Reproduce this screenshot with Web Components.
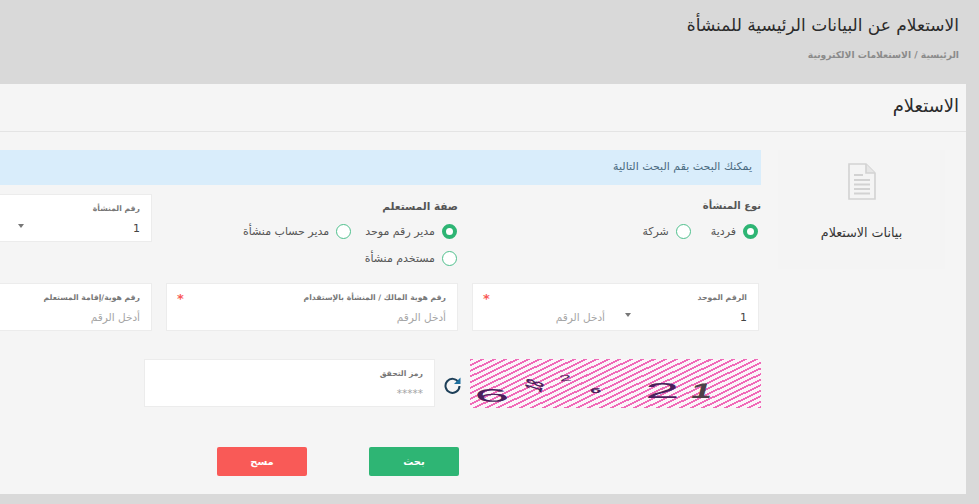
<!DOCTYPE html>
<html lang="ar" dir="rtl">
<head>
<meta charset="utf-8">
<title>الاستعلام</title>
<style>
  html, body { margin: 0; padding: 0; height: 504px; overflow: hidden; background: #d9d9d9; }
  body { font-family: "DejaVu Sans", sans-serif; color: #333; }
</style>
</head>
<body>
<x-page-head title-text="الاستعلام عن البيانات الرئيسية للمنشأة" crumbs="الرئيسية / الاستعلامات الالكترونية"></x-page-head>
<x-panel heading="الاستعلام">
  <x-side-card slot="side" label="بيانات الاستعلام"></x-side-card>
  <x-alert>يمكنك البحث بقم البحث التالية</x-alert>
  <x-row class="types">
    <x-radio-group heading="نوع المنشأة" class="first">
      <x-radio checked>فردية</x-radio>
      <x-radio>شركة</x-radio>
    </x-radio-group>
    <x-radio-group heading="صفة المستعلم">
      <x-radio checked>مدير رقم موحد</x-radio>
      <x-radio>مدير حساب منشأة</x-radio>
      <x-radio>مستخدم منشأة</x-radio>
    </x-radio-group>
    <x-field label="رقم المنشأة" value="1" select></x-field>
  </x-row>
  <x-row class="ids">
    <x-field label="الرقم الموحد" value="1" select placeholder="أدخل الرقم" required></x-field>
    <x-field label="رقم هوية المالك / المنشأة بالإستقدام" placeholder="أدخل الرقم" required></x-field>
    <x-field label="رقم هوية/إقامة المستعلم" placeholder="أدخل الرقم"></x-field>
  </x-row>
  <x-row class="verify">
    <x-captcha></x-captcha>
    <x-field label="رمز التحقق" placeholder="*****"></x-field>
  </x-row>
  <x-actions>
    <x-btn color="#2eb574">بحث</x-btn>
    <x-btn color="#f95a57">مسح</x-btn>
  </x-actions>
</x-panel>

<script>
/* global HTMLElement customElements */

class XPageHead extends HTMLElement {
  connectedCallback() {
    const shadowRoot = this.attachShadow({ mode: 'open' });
    shadowRoot.innerHTML = `
      <style>
        :host { display: block; height: 84px; padding: 0 20px 0 0; box-sizing: border-box; }
        h1 { margin: 0; padding-top: 13px; font-size: 17px; line-height: 24px; font-weight: 400; color: #2b2b2b; }
        div { margin-top: 8px; font-size: 9.2px; line-height: 20px; font-weight: 700; color: #8b8b8b; }
      </style>
      <h1>${this.getAttribute('title-text')}</h1>
      <div>${this.getAttribute('crumbs')}</div>
    `;
  }
}
customElements.define('x-page-head', XPageHead);

class XPanel extends HTMLElement {
  connectedCallback() {
    const shadowRoot = this.attachShadow({ mode: 'open' });
    shadowRoot.innerHTML = `
      <style>
        :host { display: block; width: 966px; height: 410px; margin-right: 13px; background: #f5f5f5; overflow: hidden; }
        header { height: 48px; box-sizing: border-box; border-bottom: 1px solid #e4e4e4; padding-right: 7px;
          font-size: 18px; line-height: 43px; color: #2b2b2b; }
        .body { display: flex; align-items: flex-start; padding-top: 18px; }
        .side { flex: none; width: 205px; padding-right: 21px; box-sizing: border-box; }
        .main { flex: none; width: 761px; }
      </style>
      <header>${this.getAttribute('heading')}</header>
      <div class="body">
        <div class="side"><slot name="side"></slot></div>
        <div class="main"><slot></slot></div>
      </div>
    `;
  }
}
customElements.define('x-panel', XPanel);

class XSideCard extends HTMLElement {
  connectedCallback() {
    const shadowRoot = this.attachShadow({ mode: 'open' });
    shadowRoot.innerHTML = `
      <style>
        :host { display: flex; flex-direction: column; align-items: center; width: 167px; height: 106px; padding-top: 13px;
          background: #f4f4f4; }
        svg { display: block; }
        span { margin-top: 25px; font-size: 12.7px; line-height: 16px; color: #333; }
      </style>
      <svg width="28" height="37" viewBox="0 0 28 37" fill="none" stroke="#d2d2d2" stroke-width="1.6">
        <path d="M1 1H18L27 10V36H1Z"/>
        <path d="M18 1V10H27" fill="#e6e6e6"/>
        <path d="M6 12H15M6 17H22M6 21.500H22M6 26H22M6 30.500H22" stroke-width="1.800"/>
      </svg>
      <span>${this.getAttribute('label')}</span>
    `;
  }
}
customElements.define('x-side-card', XSideCard);

class XAlert extends HTMLElement {
  constructor() {
    super();
    const shadowRoot = this.attachShadow({ mode: 'open' });
    shadowRoot.innerHTML = `
      <style>
        :host { display: block; height: 35px; box-sizing: border-box; padding-right: 9px; background: #d9edfb;
          font-size: 11px; line-height: 33px; color: #4a6a80; }
      </style>
      <slot></slot>
    `;
  }
}
customElements.define('x-alert', XAlert);

class XRow extends HTMLElement {
  constructor() {
    super();
    const shadowRoot = this.attachShadow({ mode: 'open' });
    shadowRoot.innerHTML = `
      <style>
        :host { display: grid; grid-template-columns: 287px 292px 292px; column-gap: 14px; padding-right: 2px; }
        :host(.types) { margin-top: 9px; height: 89px; align-items: start; }
        :host(.ids) { height: 76px; }
        :host(.verify) { height: 88px; padding-right: 0; grid-template-columns: 291px 291px; column-gap: 35px; }
      </style>
      <slot></slot>
    `;
  }
}
customElements.define('x-row', XRow);

class XRadioGroup extends HTMLElement {
  connectedCallback() {
    const shadowRoot = this.attachShadow({ mode: 'open' });
    shadowRoot.innerHTML = `
      <style>
        :host { display: block; padding-top: 2px; }
        h3 { margin: 0; font-size: 10.5px; line-height: 20px; font-weight: 700; color: #555; }
        :host(.first) h3 { margin-right: -2px; font-size: 10px; }
        :host(.first) .opts { column-gap: 20px; padding-right: 1px; }
        .opts { display: flex; flex-wrap: wrap; column-gap: 14px; row-gap: 11px; margin-top: 7px; width: 230px; padding-right: 1px; }
      </style>
      <h3>${this.getAttribute('heading')}</h3>
      <div class="opts"><slot></slot></div>
    `;
  }
}
customElements.define('x-radio-group', XRadioGroup);

class XRadio extends HTMLElement {
  connectedCallback() {
    const shadowRoot = this.attachShadow({ mode: 'open' });
    const dot = this.hasAttribute('checked');
    shadowRoot.innerHTML = `
      <style>
        :host { display: flex; align-items: center; gap: 7px; height: 16px; font-size: 11px; color: #555; }
        i { display: block; width: 15px; height: 15px; box-sizing: border-box; border-radius: 50%;
          border: ${dot ? '4.5px solid #2eb574' : '1px solid #4fc08d'}; background: #fff; }
      </style>
      <i></i><slot></slot>
    `;
  }
}
customElements.define('x-radio', XRadio);

class XField extends HTMLElement {
  connectedCallback() {
    const shadowRoot = this.attachShadow({ mode: 'open' });
    const value = this.getAttribute('value');
    const select = this.hasAttribute('select');
    const placeholder = this.getAttribute('placeholder');
    const star = this.hasAttribute('required') ? '<b>*</b>' : '';
    shadowRoot.innerHTML = `
      <style>
        :host { display: block; position: relative; height: 48px; box-sizing: border-box; background: #fff;
          border: 1px solid #ececec; padding: 7px 11px 0 10px; }
        label { display: block; font-size: 7.7px; line-height: 14px; font-weight: 700; color: #777; }
        .line { display: flex; height: 20px; margin-top: 2px; align-items: center; }
        .sel { flex: none; width: 140px; display: flex; justify-content: space-between; align-items: center; padding-left: 18px; box-sizing: border-box;
          font-size: 11px; color: #444; }
        .sel i { display: block; width: 0; height: 0; margin-bottom: 4px; border: 3.5px solid transparent; border-top: 4px solid #777; border-bottom: 0; }
        .ph { font-size: 10.5px; color: #a5a5a5; padding-right: 2px; }
        .ph.plain { padding-right: 0; }
        b { position: absolute; left: 10px; top: 8px; font-size: 13px; line-height: 13px; font-weight: 700; color: #f95a57; }
      </style>
      <label>${this.getAttribute('label')}</label>
      <div class="line">
        ${select ? `<div class="sel"><span>${value}</span><i></i></div>` : ''}
        ${placeholder ? `<div class="ph ${select ? '' : 'plain'}">${placeholder}</div>` : ''}
      </div>
      ${star}
    `;
  }
}
customElements.define('x-field', XField);

class XCaptcha extends HTMLElement {
  constructor() {
    super();
    const shadowRoot = this.attachShadow({ mode: 'open' });
    shadowRoot.innerHTML = `
      <style>
        :host { display: block; position: relative; width: 291px; height: 49px;
          font-family: "Liberation Sans", sans-serif; }
        .pic { position: absolute; inset: 0; overflow: hidden;
          background: repeating-linear-gradient(154deg, #f06ab8 0 1.8px, #fbf5f9 1.8px 5px); }
        span { position: absolute; direction: ltr; line-height: 1; color: #4b1f5c; transform-origin: 0 0; }
        svg { position: absolute; left: -26px; top: 17px; }
      </style>
      <div class="pic">
        <span style="left:2px;top:28px;font-size:25px;transform:scale(2.5,.72) rotate(-4deg)">6</span>
        <span style="left:50px;top:27px;font-size:15px;font-weight:700;transform:rotate(-72deg) scale(.6,1.7)">18</span>
        <span style="left:88px;top:15px;font-size:11px;transform:scale(2,.8) rotate(-6deg)">2</span>
        <span style="left:120px;top:28px;font-size:10px;font-weight:700;transform:scale(2,.8)">6</span>
        <span style="left:175px;top:20px;font-size:27px;transform:scale(2.3,.85)">2</span>
        <span style="left:224px;top:21px;font-size:25px;font-weight:700;color:#4d3f48;transform:skewX(-14deg) scale(1.5,.85)">1</span>
      </div>
      <svg width="17" height="18" viewBox="0 0 17 18" fill="none">
        <path d="M14.600 6.400A7 7 0 1 0 15.500 10" stroke="#1d3f58" stroke-width="2"/>
        <path d="M16.500 1.500V8H10Z" fill="#1d6f9e"/>
      </svg>
    `;
  }
}
customElements.define('x-captcha', XCaptcha);

class XActions extends HTMLElement {
  constructor() {
    super();
    const shadowRoot = this.attachShadow({ mode: 'open' });
    shadowRoot.innerHTML = `
      <style>
        :host { display: flex; gap: 62px; padding-right: 302px; }
      </style>
      <slot></slot>
    `;
  }
}
customElements.define('x-actions', XActions);

class XBtn extends HTMLElement {
  connectedCallback() {
    const shadowRoot = this.attachShadow({ mode: 'open' });
    shadowRoot.innerHTML = `
      <style>
        :host { display: flex; align-items: center; justify-content: center; width: 90px; height: 29px; border-radius: 2px;
          background: ${this.getAttribute('color')}; color: #fff; font-size: 10px; font-weight: 700; }
      </style>
      <slot></slot>
    `;
  }
}
customElements.define('x-btn', XBtn);
</script>
</body>
</html>
